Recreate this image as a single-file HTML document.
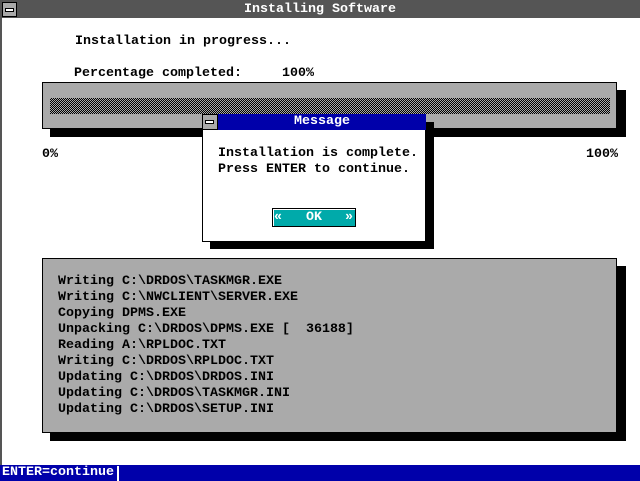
<!DOCTYPE html>
<html><head><style>
*{margin:0;padding:0;box-sizing:border-box}
body{width:640px;height:481px;background:#fff;position:relative;overflow:hidden;font-family:"Liberation Mono","DejaVu Sans Mono",monospace;font-size:13.33px;line-height:16px;color:#000;font-weight:bold}
.a{position:absolute;white-space:pre}
.hatch{background-color:#aaa;background-image:repeating-conic-gradient(#000 0 25%,#aaa 0 50%);background-size:2px 2px}
</style></head><body>
<div class="a" style="left:0;top:0;width:640px;height:18px;background:#555"></div>
<div class="a" style="left:0;top:0;width:2px;height:465px;background:#555"></div>
<div class="a" style="left:2px;top:2px;width:15px;height:15px;background:#aaa;border:1px solid #000"></div>
<div class="a" style="left:5px;top:8px;width:9px;height:4px;border:1px solid #000;background:#fff"></div>
<div class="a" style="left:0;top:2px;width:640px;text-align:center;color:#fff">Installing Software</div>
<div class="a" style="left:75px;top:34px">Installation in progress...</div>
<div class="a" style="left:74px;top:66px">Percentage completed:     100%</div>
<div class="a" style="left:50px;top:90px;width:576px;height:47px;background:#000"></div>
<div class="a" style="left:42px;top:82px;width:575px;height:47px;background:#aaa;border:1px solid #000"></div>
<div class="a hatch" style="left:50px;top:98px;width:560px;height:16px"></div>
<div class="a" style="left:42px;top:147px">0%</div>
<div class="a" style="left:586px;top:147px">100%</div>
<div class="a" style="left:210px;top:122px;width:224px;height:127px;background:#000"></div>
<div class="a" style="left:202px;top:114px;width:224px;height:128px;background:#fff;border:1px solid #000"></div>
<div class="a" style="left:218px;top:114px;width:208px;height:16px;background:#0000aa;color:#fff;text-align:center">Message</div>
<div class="a" style="left:202px;top:114px;width:16px;height:16px;background:#aaa;border:1px solid #000"></div>
<div class="a" style="left:205px;top:120px;width:9px;height:4px;border:1px solid #000;background:#fff"></div>
<div class="a" style="left:218px;top:146px">Installation is complete.
Press ENTER to continue.</div>
<div class="a" style="left:272px;top:208px;width:84px;height:19px;background:#00aaaa;border:1px solid #000;box-shadow:inset 1px 1px #fff;color:#fff"><span style="position:absolute;left:1px;top:1px">«</span><span style="position:absolute;left:33px;top:1px">OK</span><span style="position:absolute;left:72px;top:1px">»</span></div>
<div class="a" style="left:50px;top:266px;width:576px;height:175px;background:#000"></div>
<div class="a" style="left:42px;top:258px;width:575px;height:175px;background:#aaa;border:1px solid #000"></div>
<div class="a" style="left:58px;top:274px">Writing C:\DRDOS\TASKMGR.EXE
Writing C:\NWCLIENT\SERVER.EXE
Copying DPMS.EXE
Unpacking C:\DRDOS\DPMS.EXE [  36188]
Reading A:\RPLDOC.TXT
Writing C:\DRDOS\RPLDOC.TXT
Updating C:\DRDOS\DRDOS.INI
Updating C:\DRDOS\TASKMGR.INI
Updating C:\DRDOS\SETUP.INI</div>
<div class="a" style="left:0;top:465px;width:640px;height:16px;background:#0000aa;color:#fff;padding-left:2px">ENTER=continue</div>
<div class="a" style="left:117px;top:466px;width:2px;height:15px;background:#fff"></div>
</body></html>
